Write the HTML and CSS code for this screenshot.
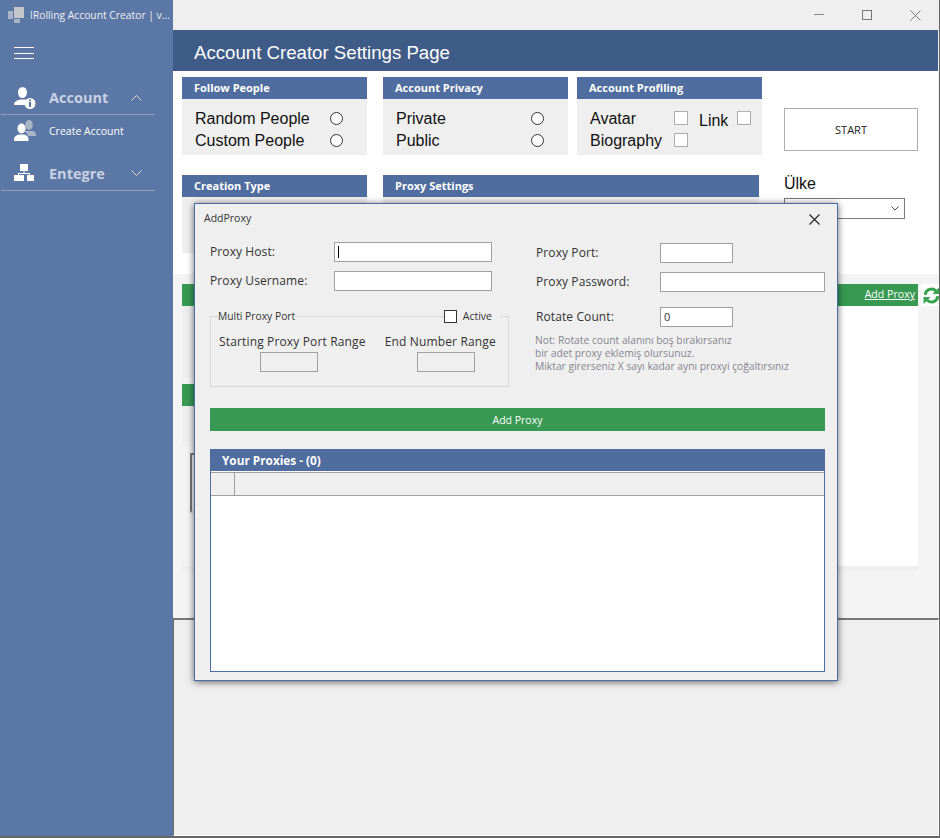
FILE: index.html
```html
<!DOCTYPE html>
<html lang="en">
<head>
    <meta charset="UTF-8">
    <meta name="viewport" content="width=device-width, initial-scale=1.0">
    <title>IRolling Account Creator</title>
    <link rel="stylesheet" href="styles.css">
</head>
<body>
    <div class="app">
        <aside class="sidebar">
            <div class="app-title">
                <svg class="logo" width="16" height="16" viewBox="0 0 16 16">
                    <rect x="0" y="4" width="5" height="8" fill="#a9b4c6"/>
                    <rect x="6" y="0" width="10" height="11" fill="#c4c6ca"/>
                    <rect x="6" y="12" width="6" height="4" fill="#a9b4c6"/>
                </svg>
                <span>IRolling Account Creator | v...</span>
            </div>
            <div class="burger"><i></i><i></i><i></i></div>
            <div class="nav-head nav-account">
                <svg width="22" height="22" viewBox="0 0 22 22">
                    <ellipse cx="8.5" cy="5.5" rx="4.5" ry="5.5" fill="#fff"/>
                    <path d="M0 18c0-3.500 3-4.500 6-5.500h5c1.200.4 2.300.8 3 1.500-1.500 1-2.400 2.400-2.500 4z" fill="#fff"/>
                    <circle cx="16" cy="16.500" r="5.500" fill="#fff"/>
                    <rect x="15" y="15" width="2" height="5" fill="#5b77a5"/>
                    <rect x="15" y="12.500" width="2" height="1.700" fill="#5b77a5"/>
                </svg>
                <span class="nav-label">Account</span>
                <svg class="chev" width="11" height="6" viewBox="0 0 11 6"><path d="M.5 5.500 5.500.5l5 5" fill="none" stroke="#d5dce8"/></svg>
            </div>
            <div class="nav-item">
                <svg width="22" height="21" viewBox="0 0 22 21">
                    <ellipse cx="15" cy="5" rx="3.800" ry="5" fill="#a9b4c6"/>
                    <path d="M11 11h8c2 .5 3 2 3 4v1h-8c-.5-2-1.500-3-3-4z" fill="#a9b4c6"/>
                    <ellipse cx="7.500" cy="8.500" rx="4" ry="5" fill="#fff"/>
                    <path d="M0 21v-2c0-2.500 2-3.500 5-4.500h5c3 1 4.500 2 4.500 4.500v2z" fill="#fff"/>
                </svg>
                <span>Create Account</span>
            </div>
            <div class="nav-head nav-entegre">
                <svg width="22" height="18" viewBox="0 0 22 18">
                    <rect x="6" y="0" width="8" height="7" fill="#fff"/>
                    <rect x="9.500" y="7" width="1" height="2" fill="#fff"/>
                    <rect x="4" y="9" width="12" height="1" fill="#fff"/>
                    <rect x="0" y="11" width="10" height="6" fill="#fff"/>
                    <rect x="13" y="11" width="7" height="6" fill="#fff"/>
                    <rect x="4" y="10" width="1" height="1" fill="#fff"/>
                    <rect x="15" y="10" width="1" height="1" fill="#fff"/>
                </svg>
                <span class="nav-label">Entegre</span>
                <svg class="chev" width="11" height="6" viewBox="0 0 11 6"><path d="M.5.500l5 5 5-5" fill="none" stroke="#d5dce8"/></svg>
            </div>
        </aside>

        <main class="main">
            <div class="topbar">
                <svg width="10" height="2" viewBox="0 0 10 2"><rect width="10" height="1" fill="#8a8a8a"/></svg>
                <svg width="10" height="10" viewBox="0 0 10 10"><rect x=".5" y=".5" width="9" height="9" fill="none" stroke="#777"/></svg>
                <svg width="11" height="11" viewBox="0 0 11 11"><path d="M.5.500l10 10M10.500.500l-10 10" fill="none" stroke="#777"/></svg>
            </div>
            <h1 class="page-title">Account Creator Settings Page</h1>

            <section class="settings">
                <div class="row">
                    <div class="card">
                        <div class="card-head">Follow People</div>
                        <div class="card-body">
                            <div class="opt"><span class="opt-label">Random People</span><i class="radio"></i></div>
                            <div class="opt"><span class="opt-label">Custom People</span><i class="radio"></i></div>
                        </div>
                    </div>
                    <div class="card card-privacy">
                        <div class="card-head">Account Privacy</div>
                        <div class="card-body">
                            <div class="opt"><span class="opt-label">Private</span><i class="radio"></i></div>
                            <div class="opt"><span class="opt-label">Public</span><i class="radio"></i></div>
                        </div>
                    </div>
                    <div class="card card-profiling">
                        <div class="card-head">Account Profiling</div>
                        <div class="card-body">
                            <div class="opt"><span class="prof-label">Avatar</span><i class="check"></i><span class="link-label">Link</span><i class="check"></i></div>
                            <div class="opt"><span class="prof-label">Biography</span><i class="check"></i></div>
                        </div>
                    </div>
                    <button class="start">START</button>
                </div>
                <div class="row row-second">
                    <div class="card card-low">
                        <div class="card-head">Creation Type</div>
                        <div class="card-body"></div>
                    </div>
                    <div class="card card-low card-proxy">
                        <div class="card-head">Proxy Settings</div>
                        <div class="card-body"></div>
                    </div>
                    <div class="country">
                        <div class="country-label">Ülke</div>
                        <div class="select">
                            <svg width="8" height="5" viewBox="0 0 8 5"><path d="M.5.500 4 4 7.500.500" fill="none" stroke="#444"/></svg>
                        </div>
                    </div>
                </div>
            </section>

            <section class="lower">
                <div class="list-row">
                    <div class="list-panel">
                        <div class="green-bar"><a class="add-link">Add Proxy</a></div>
                        <div class="list-body">
                            <div class="list-left">
                                <div class="gray-block"></div>
                                <div class="green-bar green-small"></div>
                                <div class="gray-block gray-short"></div>
                                <div class="old-box"></div>
                            </div>
                        </div>
                    </div>
                    <div class="refresh">
                        <svg width="17" height="17" viewBox="0 0 17 17">
                            <path d="M2.200 7.800A6.300 6.300 0 0 1 13 4" fill="none" stroke="#38a34f" stroke-width="3"/>
                            <path d="M9.500 7h7V0z" fill="#38a34f"/>
                            <path d="M14.800 9.200A6.300 6.300 0 0 1 4 13" fill="none" stroke="#38a34f" stroke-width="3"/>
                            <path d="M7.500 10h-7v7z" fill="#38a34f"/>
                        </svg>
                    </div>
                </div>
            </section>

            <section class="bottom-panel"></section>
        </main>

        <div class="dialog">
            <div class="dialog-bar">
                <span>AddProxy</span>
                <svg width="11" height="11" viewBox="0 0 11 11"><path d="M.5.500l10 10M10.500.500l-10 10" fill="none" stroke="#222" stroke-width="1.100"/></svg>
            </div>
            <div class="dialog-body">
                <div class="form">
                    <div class="form-left">
                        <div class="field-row">
                            <label>Proxy Host:</label>
                            <div class="input input-wide"><i class="caret"></i></div>
                        </div>
                        <div class="field-row">
                            <label>Proxy Username:</label>
                            <div class="input input-wide"></div>
                        </div>
                        <div class="group">
                            <span class="group-title">Multi Proxy Port</span>
                            <span class="group-active"><i class="check check-dark"></i>Active</span>
                            <div class="ranges">
                                <div class="range range-start">
                                    <div class="range-label">Starting Proxy Port Range</div>
                                    <div class="input input-off"></div>
                                </div>
                                <div class="range range-end">
                                    <div class="range-label">End Number Range</div>
                                    <div class="input input-off"></div>
                                </div>
                            </div>
                        </div>
                    </div>
                    <div class="form-right">
                        <div class="field-row">
                            <label>Proxy Port:</label>
                            <div class="input input-short"></div>
                        </div>
                        <div class="field-row">
                            <label>Proxy Password:</label>
                            <div class="input input-long"></div>
                        </div>
                        <div class="field-row rotate-row">
                            <label>Rotate Count:</label>
                            <div class="input input-short">0</div>
                        </div>
                        <p class="note">Not: Rotate count alanını boş bırakırsanız<br>bir adet proxy eklemiş olursunuz.<br>Miktar girerseniz X sayı kadar aynı proxyi çoğaltırsınız</p>
                    </div>
                </div>
                <button class="add-btn">Add Proxy</button>
                <div class="proxies">
                    <div class="proxies-head">Your Proxies - (0)</div>
                    <div class="grid-head"><div class="grid-corner"></div></div>
                </div>
            </div>
        </div>
    </div>
</body>
</html>
```

FILE: styles.css
```css
* {
    margin: 0;
    padding: 0;
    box-sizing: border-box;
}
body {
    background-color: #efefef;
    font-family: "Open Sans", "Noto Sans", sans-serif;
    font-size: 12px;
    color: #333;
}
i {
    display: block;
}
.app {
    position: relative;
    display: flex;
    width: 940px;
    height: 838px;
    overflow: hidden;
    border-right: 1px solid #666;
    border-bottom: 2px solid #666;
}
.sidebar {
    width: 173px;
    flex-shrink: 0;
    background-color: #5b77a5;
    color: #fff;
}
.app-title {
    display: flex;
    align-items: center;
    gap: 6px;
    height: 29px;
    padding: 0 0 0 8px;
    white-space: nowrap;
    font-size: 10.300px;
    color: #eef1f6;
}
.logo {
    flex-shrink: 0;
}
.burger {
    display: flex;
    flex-direction: column;
    gap: 4.500px;
    width: 20px;
    margin: 18px 0 0 14px;
}
.burger i {
    height: 1px;
    background-color: #fff;
}
.nav-head {
    display: flex;
    align-items: center;
    width: 154px;
    height: 29px;
    margin-left: 1px;
    padding-left: 13px;
    border-bottom: 1px solid #8c9fbf;
}
.nav-account {
    margin-top: 26px;
    height: 30px;
    padding-bottom: 4px;
}
.nav-entegre {
    margin-top: 16px;
    padding-bottom: 6px;
}
.nav-label {
    width: 82px;
    margin-left: 13px;
    font-size: 14.500px;
    font-weight: 700;
    color: #c8d1e1;
}
.nav-item {
    display: flex;
    align-items: center;
    gap: 13px;
    height: 31px;
    padding-left: 14px;
    font-size: 10.500px;
    color: #fff;
}
.main {
    flex: 1;
    display: flex;
    flex-direction: column;
    min-width: 0;
}
.topbar {
    display: flex;
    align-items: center;
    justify-content: flex-end;
    gap: 38px;
    height: 30px;
    padding-right: 18px;
    background-color: #efefef;
}
.page-title {
    height: 41px;
    padding-left: 21px;
    margin-right: 1px;
    background-color: #3f5b87;
    color: #fff;
    font-family: "Liberation Sans", Arial, sans-serif;
    font-size: 18.650px;
    font-weight: 400;
    line-height: 46px;
}
.settings {
    height: 203px;
    padding: 6px 0 0 9px;
    margin-right: 1px;
    background-color: #fff;
}
.row {
    display: flex;
    align-items: flex-start;
}
.row-second {
    margin-top: 20px;
}
.card {
    width: 185px;
    margin-right: 16px;
}
.card-privacy {
    margin-right: 9px;
}
.card-profiling {
    margin-right: 22px;
}
.card-proxy {
    width: 376px;
    margin-right: 25px;
}
.card-head {
    height: 22px;
    padding-left: 12px;
    background-color: #4f6d9e;
    color: #fff;
    font-size: 11px;
    font-weight: 700;
    line-height: 22px;
}
.card-body {
    height: 56px;
    padding: 8px 0 0 13px;
    background-color: #efefef;
}
.opt {
    display: flex;
    align-items: center;
    height: 22px;
    font-family: "Liberation Sans", Arial, sans-serif;
    font-size: 16px;
    color: #111;
}
.opt-label {
    width: 135px;
    padding-top: 2px;
}
.radio {
    width: 13px;
    height: 13px;
    border: 1px solid #333;
    border-radius: 50%;
    background-color: #fff;
}
.check {
    width: 14px;
    height: 14px;
    border: 1px solid #adadad;
    background-color: #fff;
}
.prof-label {
    width: 84px;
    padding-top: 2px;
}
.link-label {
    width: 38px;
    margin: 5px 0 0 11px;
}
.start {
    width: 134px;
    height: 43px;
    margin-top: 31px;
    background-color: #fff;
    border: 1px solid #adadad;
    font-family: "Open Sans", sans-serif;
    font-size: 11px;
    color: #222;
}
.country-label {
    padding-top: 1px;
    font-family: "Liberation Sans", Arial, sans-serif;
    font-size: 16px;
    line-height: 16px;
    color: #111;
}
.select {
    display: flex;
    align-items: center;
    justify-content: flex-end;
    width: 121px;
    height: 21px;
    margin-top: 6px;
    padding-right: 5px;
    background-color: #fff;
    border: 1px solid #7a7a7a;
}
.lower {
    height: 344px;
    padding: 10px 0 0 9px;
    margin-right: 1px;
    background-color: #f4f4f4;
}
.list-row {
    display: flex;
    align-items: flex-start;
}
.list-panel {
    width: 736px;
    height: 287px;
    flex-shrink: 0;
    background-color: #fff;
    border-bottom: 5px solid #efefef;
}
.green-bar {
    height: 22px;
    padding-right: 3px;
    background-color: #389952;
    text-align: right;
    line-height: 20px;
}
.add-link {
    color: #fff;
    font-size: 10.600px;
    text-decoration: underline;
}
.list-left {
    width: 100px;
    height: 260px;
    background-color: #f4f4f4;
}
.gray-block {
    height: 72px;
    background-color: #efefef;
}
.green-small {
    margin-top: 6px;
}
.gray-short {
    height: 40px;
}
.old-box {
    height: 60px;
    margin: 7px 0 0 8px;
    border: 2px solid #777;
    border-bottom-color: #ddd;
}
.refresh {
    display: flex;
    align-items: center;
    justify-content: flex-end;
    width: 19px;
    height: 22px;
    flex-shrink: 0;
    margin-left: 3px;
    background-color: #fff;
}
.bottom-panel {
    flex: 1;
    background-color: #efefef;
    border-top: 2px solid #777;
    border-left: 1px solid #6a6a6a;
    border-right: 1px solid #fff;
    border-bottom: 1px solid #fff;
}

/* AddProxy popup, sits over the page */
.dialog {
    position: absolute;
    left: 194px;
    top: 203px;
    width: 644px;
    height: 478px;
    background-color: #efefef;
    border: 1px solid #4a6ea9;
    box-shadow: 0 1px 7px rgba(0, 0, 0, 0.6);
}
.dialog-bar {
    display: flex;
    justify-content: space-between;
    height: 38px;
    padding: 7px 17px 0 9px;
    font-size: 10.500px;
}
.dialog-bar svg {
    margin-top: 3px;
}
.dialog-body {
    padding: 0 12px 0 15px;
}
.form {
    display: grid;
    grid-template-columns: 299px 289px;
    column-gap: 27px;
}
.form-right {
    padding-top: 1px;
}
.field-row {
    display: flex;
    align-items: center;
    margin-bottom: 9px;
}
.field-row label {
    width: 124px;
    padding-bottom: 2px;
    letter-spacing: 0.1px;
}
.input {
    height: 20px;
    padding-left: 3px;
    background-color: #fff;
    border: 1px solid #a0a0a0;
    line-height: 18px;
    font-size: 11px;
}
.input-wide {
    width: 158px;
}
.input-short {
    width: 73px;
}
.input-long {
    width: 165px;
}
.input-off {
    width: 58px;
    background-color: #efefef;
}
.caret {
    width: 1px;
    height: 12px;
    margin-top: 3px;
    background-color: #000;
}
.rotate-row {
    margin-top: 15px;
    margin-bottom: 0;
}
.note {
    margin: 7px 0 0 -1px;
    font-size: 10.280px;
    line-height: 13px;
    color: #85858f;
}
.group {
    position: relative;
    height: 71px;
    margin-top: 25px;
    border: 1px solid #d8d8d8;
}
.group-title {
    position: absolute;
    left: 7px;
    top: -8px;
    background-color: #efefef;
    font-size: 10.300px;
    line-height: 15px;
}
.group-active {
    position: absolute;
    right: 8px;
    top: -8px;
    display: flex;
    align-items: center;
    gap: 6px;
    padding-right: 8px;
    background-color: #efefef;
    font-size: 10.500px;
    line-height: 15px;
}
.check-dark {
    width: 13px;
    height: 13px;
    border-color: #333;
}
.ranges {
    display: flex;
    gap: 19px;
    padding: 17px 0 0 8px;
}
.range-label {
    margin-bottom: 2px;
    line-height: 16px;
    letter-spacing: 0.15px;
    white-space: nowrap;
}
.range-start .input {
    margin-left: 41px;
}
.range-end .input {
    margin-left: 32px;
}
.add-btn {
    display: block;
    width: 615px;
    height: 23px;
    margin-top: 21px;
    background-color: #389952;
    border: none;
    color: #fff;
    font-family: "Open Sans", sans-serif;
    font-size: 10.500px;
}
.proxies {
    height: 223px;
    margin-top: 18px;
    background-color: #fff;
    border: 1px solid #4a6ea9;
}
.proxies-head {
    height: 22px;
    margin: -1px -1px 0;
    padding-left: 12px;
    background-color: #4f6d9e;
    color: #fff;
    font-size: 11.800px;
    font-weight: 700;
    line-height: 22px;
}
.grid-head {
    height: 24px;
    margin-top: 1px;
    background-color: #efefef;
    border-top: 1px solid #a0a0a0;
    border-bottom: 1px solid #a0a0a0;
}
.grid-corner {
    width: 24px;
    height: 100%;
    border-right: 1px solid #a0a0a0;
}
```
